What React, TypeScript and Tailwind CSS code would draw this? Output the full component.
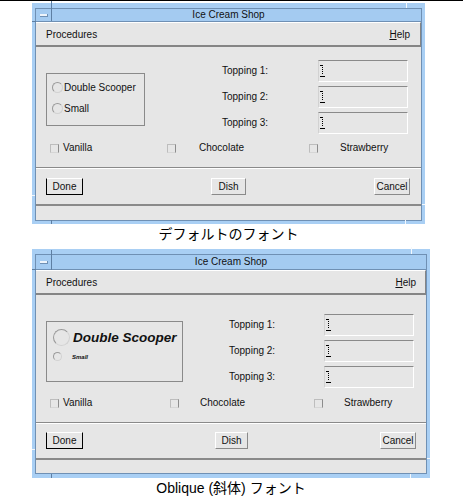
import React from "react";

const ui = "font-['Liberation_Sans',Arial,sans-serif] text-[#111]";

function Cursor() {
  return (
    <svg width="5" height="12" viewBox="0 0 5 12" shapeRendering="crispEdges" className="block">
      <rect x="0" y="0" width="3" height="1" fill="#000" />
      <rect x="2" y="2" width="1" height="1" fill="#000" />
      <rect x="2" y="4" width="1" height="1" fill="#000" />
      <rect x="2" y="6" width="1" height="1" fill="#000" />
      <rect x="2" y="8" width="1" height="1" fill="#000" />
      <rect x="0" y="11" width="5" height="1" fill="#000" />
    </svg>
  );
}

function Field() {
  return (
    <div className="h-[22px] w-[90px] border-t border-t-[#8a8a8a] border-l border-l-[#d2d2d2] border-r border-r-white border-b border-b-white flex items-center pl-[1px]">
      <Cursor />
    </div>
  );
}

function Label({ children }: { children: React.ReactNode }) {
  return <div className="h-[22px] flex items-center text-[10px] leading-[12px]">{children}</div>;
}

function Toppings({ ob }: { ob: boolean }) {
  return (
    <div className={`grid gap-y-[4px] ${ob ? "grid-cols-[95px_90px]" : "grid-cols-[96px_90px]"}`}>
      <Label>Topping 1:</Label>
      <Field />
      <Label>Topping 2:</Label>
      <Field />
      <Label>Topping 3:</Label>
      <Field />
    </div>
  );
}

function Box() {
  return (
    <span className="block w-[9px] h-[9px] border border-t-[#bdbdbd] border-l-[#bdbdbd] border-r-[#8c8c8c] border-b-[#d6d6d6]" />
  );
}

function Checks({ ob }: { ob: boolean }) {
  return (
    <div
      className={`h-[12px] grid items-center pl-[14px] text-[10px] leading-[12px] ${
        ob ? "mt-[9px] grid-cols-[120px_144px_1fr]" : "mt-[8px] grid-cols-[117px_142px_1fr]"
      }`}
    >
      <div className="flex items-center">
        <Box />
        <span className="ml-[4px]">Vanilla</span>
      </div>
      <div className="flex items-center">
        <Box />
        <span className={ob ? "ml-[21px]" : "ml-[23px]"}>Chocolate</span>
      </div>
      <div className="flex items-center">
        <Box />
        <span className={ob ? "ml-[21px]" : "ml-[22px]"}>Strawberry</span>
      </div>
    </div>
  );
}

function Circle({ size }: { size: "lg" | "md" | "sm" }) {
  const s =
    size === "lg" ? "w-[17px] h-[17px]" : size === "md" ? "w-[11px] h-[11px]" : "w-[9px] h-[9px]";
  return (
    <span
      className={`block shrink-0 rounded-full border border-t-[#9a9a9a] border-l-[#9a9a9a] border-b-[#d2d2d2] border-r-[#d2d2d2] ${s}`}
    />
  );
}

function RadioBox({ ob }: { ob: boolean }) {
  if (!ob) {
    return (
      <div className="mt-[13px] w-[99px] h-[53px] border border-[#8a8a8a] pt-[8px] pl-[5px] flex flex-col gap-[10px] text-[10px] leading-[12px]">
        <div className="flex items-center h-[11px]">
          <Circle size="md" />
          <span className="ml-[1px]">Double Scooper</span>
        </div>
        <div className="flex items-center h-[11px]">
          <Circle size="md" />
          <span className="ml-[1px]">Small</span>
        </div>
      </div>
    );
  }
  return (
    <div className="mt-[7px] w-[137px] h-[61px] border border-[#8a8a8a] pt-[7px] pl-[6px] flex flex-col">
      <div className="flex items-center h-[17px]">
        <Circle size="lg" />
        <span className="ml-[3px] text-[13.5px] leading-[16px] font-bold italic">Double Scooper</span>
      </div>
      <div className="flex items-center h-[9px] mt-[6px]">
        <Circle size="sm" />
        <span className="ml-[10px] text-[6px] leading-[8px] font-bold italic">Small</span>
      </div>
    </div>
  );
}

function Button({ children, def, w }: { children: React.ReactNode; def?: boolean; w: string }) {
  return (
    <div
      className={`h-[17px] ${w} flex items-center justify-center text-[10px] leading-[12px] border ${
        def
          ? "border-black border-t-white"
          : "border-t-white border-l-white border-r-[#8a8a8a] border-b-[#8a8a8a]"
      }`}
    >
      {children}
    </div>
  );
}

function Window({ ob }: { ob: boolean }) {
  const mark = "absolute bg-[#5e7fa3]";
  const markW = "absolute bg-[#f4f8fc]";
  return (
    <div
      className={`relative ml-[32px] bg-[#a9cff4] px-[3px] pt-[5px] ${ui} ${
        ob ? "w-[398px] pb-[4px]" : "w-[393px] pb-[3px]"
      }`}
    >
      <div className={`${mark} left-[19px] w-px ${ob ? "top-[1px] h-[20px]" : "top-[-2px] h-[20px]"}`} />
      <div className={`${mark} left-0 w-[4px] h-px ${ob ? "top-[20px]" : "top-[18px]"}`} />
      <div className={`${markW} right-[18px] w-px top-[-2px] h-[7px]`} />
      <div className={`${mark} left-[19px] w-px bottom-0 h-[4px]`} />
      <div className={`${markW} right-[19px] w-px bottom-0 h-[4px]`} />
      <div className={`${markW} left-0 w-[3px] h-px bottom-[28px]`} />
      <div className={`${markW} right-0 w-[3px] h-px bottom-[19px]`} />

      <div className="border border-[#6f90b4] bg-[#e6e6e6]">
        {/* title bar */}
        <div
          className={`grid grid-cols-[16px_1fr_16px] items-center bg-[#a4cbf1] border-b border-b-[#6f90b4] ${
            ob ? "h-[15px]" : "h-[13px]"
          }`}
        >
          <div className="flex items-center pl-[4px]">
            <span className="block w-[8px] h-[3px] bg-[#eef4fb] border-b border-r border-[#6f90b4]" />
          </div>
          <div className="text-center text-[10px] leading-[12px]">Ice Cream Shop</div>
          <div />
        </div>
        {/* menu bar */}
        <div
          className={`h-[25px] border-t border-t-white border-b-2 border-b-[#858585] border-r border-r-[#858585] pt-[6px] pl-[10px] flex justify-between text-[10px] leading-[12px] ${
            ob ? "pr-[9px]" : "pr-[10px]"
          }`}
        >
          <span>Procedures</span>
          <span>
            <span className="underline underline-offset-[1px]">H</span>elp
          </span>
        </div>
        {/* content */}
        <div className={ob ? "h-[127px] pt-[19px]" : "h-[120px] pt-[13px]"}>
          <div className={`flex justify-between items-start pl-[10px] ${ob ? "pr-[12px]" : "pr-[13px]"}`}>
            <RadioBox ob={ob} />
            <Toppings ob={ob} />
          </div>
          <Checks ob={ob} />
        </div>
        <div className="h-[2px] border-t border-t-[#8a8a8a] border-b border-b-white" />
        {/* buttons */}
        <div
          className={`flex justify-between items-start pl-[10px] ${
            ob ? "h-[34px] pt-[8px] pr-[10px]" : "h-[35px] pt-[9px] pr-[11px]"
          }`}
        >
          <Button def w="w-[37px]">
            Done
          </Button>
          <Button w={ob ? "w-[33px]" : "w-[35px]"}>Dish</Button>
          <Button w="w-[36px]">Cancel</Button>
        </div>
        <div className="h-[2px] bg-[#8a8a8a]" />
        <div className={ob ? "h-[13px]" : "h-[14px]"} />
      </div>
    </div>
  );
}

export default function App() {
  const cap =
    "font-['Liberation_Sans','Noto_Sans_CJK_JP',sans-serif] text-[14px] leading-[20px] text-black text-center ml-[32px]";
  return (
    <div className="w-[463px] h-[496px] bg-white overflow-hidden">
      <div className="h-px bg-black" />
      <div className="h-[2px]" />
      <Window ob={false} />
      <div className={`${cap} w-[393px] h-[25px]`}>デフォルトのフォント</div>
      <Window ob={true} />
      <div className={`${cap} w-[398px] h-[18px]`}>Oblique (斜体) フォント</div>
    </div>
  );
}
